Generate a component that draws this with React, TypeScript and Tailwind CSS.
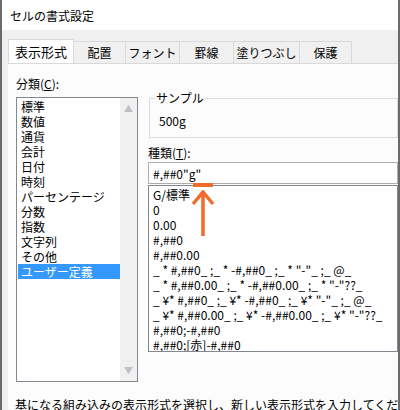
export default function App() {
  const f = { fontFamily: '"Noto Sans CJK JP", "Noto Sans", sans-serif' };
  const cats = ["標準","数値","通貨","会計","日付","時刻","パーセンテージ","分数","指数","文字列","その他","ユーザー定義"];
  const fmts = ["G/標準","0","0.00","#,##0","#,##0.00","_ * #,##0_ ;_ * -#,##0_ ;_ * \"-\"_ ;_ @_","_ * #,##0.00_ ;_ * -#,##0.00_ ;_ * \"-\"??_","_ ¥* #,##0_ ;_ ¥* -#,##0_ ;_ ¥* \"-\"_ ;_ @_","_ ¥* #,##0.00_ ;_ ¥* -#,##0.00_ ;_ ¥* \"-\"??_","#,##0;-#,##0","#,##0;[赤]-#,##0"];
  return (
    <div style={f} className="w-[400px] h-[410px] overflow-hidden bg-[#f0f0f0] text-[12px] leading-[15px] text-black relative border-l-2 border-r-2 border-[#6b6b6b]">
      <div className="h-[30px] bg-white flex items-center pl-[8px] text-[12px]">セルの書式設定</div>
      <div className="flex pl-[6px] h-[33px] items-end">
        <div className="h-[24px] w-[66px] bg-white border border-b-0 border-[#d9d9d9] flex items-center justify-center text-[13px]">表示形式</div>
        {["配置","フォント","罫線","塗りつぶし","保護"].map((t, i) => (
          <div key={t} className={`h-[22px] bg-[#f0f0f0] border border-l-0 border-b-0 border-[#d9d9d9] flex items-center justify-center text-[12px] ${["w-[52px]","w-[54px]","w-[54px]","w-[66px]","w-[52px]"][i]}`}>{t}</div>
        ))}
      </div>
      <div className="bg-[#fcfcfc] border-t border-[#d9d9d9] h-[360px] ml-[6px] flex pl-[8px] pt-[12px] gap-[10px]">
        <div className="w-[122px] shrink-0">
          <div className="h-[18px] mb-[3px]">分類(<span className="underline">C</span>):</div>
          <div className="h-[285px] border border-[#828790] bg-white flex">
            <div className="flex-1 pl-[1px] pt-[1px]">
              {cats.map((c, i) => (
                <div key={c} className={`pl-[3px] h-[15px] leading-[15px] whitespace-nowrap ${i === 11 ? "bg-[#3399ff] text-white" : ""}`}>{c}</div>
              ))}
            </div>
            <div className="w-[17px] bg-[#f0f0f0] flex flex-col justify-between items-center py-[3px] text-[#c0c0c0] text-[9px]">
              <span>▲</span><span>▼</span>
            </div>
          </div>
        </div>
        <div className="flex-1 relative">
          <div className="border border-[#dcdcdc] mt-[22px] h-[40px] relative ml-[1px]">
            <span className="absolute -top-[9px] left-[5px] bg-[#fcfcfc] px-[1px]">サンプル</span>
            <div className="pl-[9px] pt-[14px]">500g</div>
          </div>
          <div className="mt-[6px] h-[18px] leading-[18px]">種類(<span className="underline">T</span>):</div>
          <div className="h-[22px] border border-[#adadad] bg-white flex items-center pl-[4px] mt-[0px] whitespace-nowrap">#,##0"g"</div>
          <div className="h-[167px] border border-[#828790] bg-white mt-[1px] pl-[4px] pt-[1px] overflow-hidden whitespace-nowrap">
            {fmts.map((t) => <div key={t} className="h-[15px] leading-[15px]">{t}</div>)}
          </div>
          <div className="absolute left-[45px] top-[107px] w-[20px] h-[4px] bg-[#f26b2a]" />
          <svg className="absolute left-[43px] top-[114px]" width="24" height="48" viewBox="0 0 24 48">
            <path d="M12 2 V46 M2 14 L12 2 L22 14" stroke="#f26b2a" strokeWidth="3.5" fill="none" />
          </svg>
          <div className="absolute -left-[133px] top-[321px] whitespace-nowrap">基になる組み込みの表示形式を選択し、新しい表示形式を入力してください。</div>
        </div>
      </div>
    </div>
  );
}
